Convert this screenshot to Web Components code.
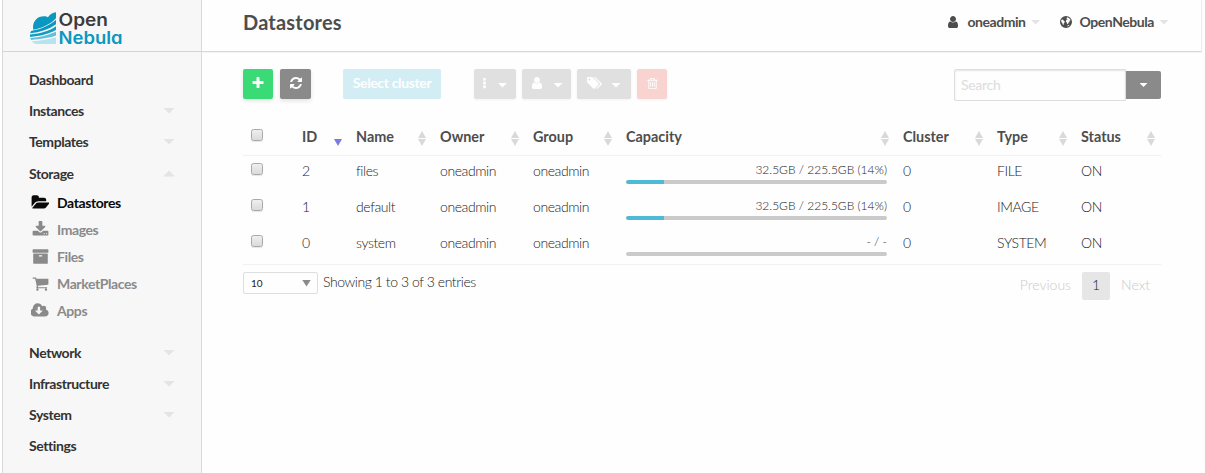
<!DOCTYPE html>
<html lang="en">
<head>
<meta charset="utf-8">
<title>OpenNebula Sunstone</title>
<style>
html,body{margin:0;height:100%;overflow:hidden;background:#fefefe}
body{font-family:Lato,"Liberation Sans",sans-serif;color:#4d4d4d}
</style>
</head>
<body>
<one-app></one-app>
<script>
const ICONS = {
plus:[1792,'M1600 736v192q0 40-28 68t-68 28h-416v416q0 40-28 68t-68 28h-192q-40 0-68-28t-28-68v-416h-416q-40 0-68-28t-28-68v-192q0-40 28-68t68-28h416v-416q0-40 28-68t68-28h192q40 0 68 28t28 68v416h416q40 0 68 28t28 68z'],
refresh:[1792,'M1639 1056q0 5-1 7-64 268-268 434.5t-478 166.5q-146 0-282.5-55t-243.5-157l-129 129q-19 19-45 19t-45-19-19-45v-448q0-26 19-45t45-19h448q26 0 45 19t19 45-19 45l-137 137q71 66 161 102t187 36q134 0 250-65t186-179q11-17 53-117 8-23 30-23h192q13 0 22.5 9.5t9.5 22.5zm25-800v448q0 26-19 45t-45 19h-448q-26 0-45-19t-19-45 19-45l138-138q-148-137-349-137-134 0-250 65t-186 179q-11 17-53 117-8 23-30 23h-199q-13 0-22.5-9.5t-9.5-22.5v-7q65-268 270-434.5t480-166.5q146 0 284 55.5t245 156.5l130-129q19-19 45-19t45 19 19 45z'],
user:[1792,'M1536 1399q0 109-62.5 187t-150.5 78h-854q-88 0-150.5-78t-62.5-187q0-85 8.5-160.5t31.5-152 58.5-131 94-89 134.5-34.5q131 128 313 128t313-128q76 0 134.5 34.5t94 89 58.5 131 31.5 152 8.5 160.5zm-256-887q0 159-112.5 271.5t-271.5 112.5-271.5-112.5-112.5-271.5 112.5-271.5 271.5-112.5 271.5 112.5 112.5 271.5z'],
ellipsis:[1792,'M1088 1248v192q0 40-28 68t-68 28h-192q-40 0-68-28t-28-68v-192q0-40 28-68t68-28h192q40 0 68 28t28 68zm0-512v192q0 40-28 68t-68 28h-192q-40 0-68-28t-28-68v-192q0-40 28-68t68-28h192q40 0 68 28t28 68zm0-512v192q0 40-28 68t-68 28h-192q-40 0-68-28t-28-68v-192q0-40 28-68t68-28h192q40 0 68 28t28 68z'],
trash:[1792,'M704 736v576q0 14-9 23t-23 9h-64q-14 0-23-9t-9-23v-576q0-14 9-23t23-9h64q14 0 23 9t9 23zm256 0v576q0 14-9 23t-23 9h-64q-14 0-23-9t-9-23v-576q0-14 9-23t23-9h64q14 0 23 9t9 23zm256 0v576q0 14-9 23t-23 9h-64q-14 0-23-9t-9-23v-576q0-14 9-23t23-9h64q14 0 23 9t9 23zm128 724v-948h-896v948q0 22 7 40.5t14.5 27 10.5 8.5h832q3 0 10.5-8.5t14.5-27 7-40.5zm-672-1076h448l-48-117q-7-9-17-11h-317q-10 2-17 11zm928 32v64q0 14-9 23t-23 9h-96v948q0 83-47 143.5t-113 60.5h-832q-66 0-113-58.5t-47-141.5v-952h-96q-14 0-23-9t-9-23v-64q0-14 9-23t23-9h309l70-167q15-37 54-63t79-26h320q40 0 79 26t54 63l70 167h309q14 0 23 9t9 23z'],
tags:[1920,'M448 448q0-53-37.5-90.5t-90.5-37.5-90.5 37.5-37.5 90.5 37.5 90.5 90.5 37.5 90.5-37.5 37.5-90.5zm1067 576q0 53-37 90l-491 492q-39 37-91 37-53 0-90-37l-715-716q-38-37-64.5-101t-26.5-117v-416q0-52 38-90t90-38h416q53 0 117 26.5t102 64.5l715 714q37 39 37 91zm384 0q0 53-37 90l-491 492q-39 37-91 37-36 0-59-14t-53-45l470-470q37-37 37-90 0-52-37-91l-715-714q-38-38-102-64.5t-117-26.5h224q53 0 117 26.5t102 64.5l715 714q37 39 37 91z'],
folder:[1952,'M1943 952q0 31-31 66l-336 396q-43 51-120.5 86.5t-143.5 35.5h-1088q-34 0-60.5-13t-26.5-43q0-31 31-66l336-396q43-51 120.5-86.5t143.5-35.5h1088q34 0 60.5 13t26.5 43zm-343-344v160h-832q-94 0-197 47.5t-164 119.5l-337 396-5 6q0-4-.5-12.5t-.5-12.5v-960q0-92 66-158t158-66h320q92 0 158 66t66 158v32h544q92 0 158 66t66 158z'],
download:[1792,'M1344 1344q0-26-19-45t-45-19-45 19-19 45 19 45 45 19 45-19 19-45zm256 0q0-26-19-45t-45-19-45 19-19 45 19 45 45 19 45-19 19-45zm128-224v320q0 40-28 68t-68 28h-1472q-40 0-68-28t-28-68v-320q0-40 28-68t68-28h465l135 136q58 56 136 56t136-56l136-136h464q40 0 68 28t28 68zm-325-569q17 41-14 70l-448 448q-18 19-45 19t-45-19l-448-448q-31-29-14-70 17-39 59-39h256v-448q0-26 19-45t45-19h256q26 0 45 19t19 45v448h256q42 0 59 39z'],
archive:[1792,'M1088 832q0-26-19-45t-45-19h-256q-26 0-45 19t-19 45 19 45 45 19h256q26 0 45-19t19-45zm576-192v960q0 26-19 45t-45 19h-1408q-26 0-45-19t-19-45v-960q0-26 19-45t45-19h1408q26 0 45 19t19 45zm64-448v256q0 26-19 45t-45 19h-1536q-26 0-45-19t-19-45v-256q0-26 19-45t45-19h1536q26 0 45 19t19 45z'],
cart:[1792,'M704 1536q0 52-38 90t-90 38-90-38-38-90 38-90 90-38 90 38 38 90zm896 0q0 52-38 90t-90 38-90-38-38-90 38-90 90-38 90 38 38 90zm128-1088v512q0 24-16.5 42.5t-40.5 21.5l-1044 122q13 60 13 70 0 16-24 64h920q26 0 45 19t19 45-19 45-45 19h-1024q-26 0-45-19t-19-45q0-11 8-31.5t16-36 21.5-40 15.5-29.5l-177-823h-204q-26 0-45-19t-19-45 19-45 45-19h256q16 0 28.5 6.5t19.5 15.5 13 24.5 8 26 5.5 29.5 4.5 26h1201q26 0 45 19t19 45z'],
cloud:[1856,'M1216 928q0-14-9-23t-23-9h-224v-352q0-13-9.5-22.5t-22.5-9.5h-192q-13 0-22.5 9.5t-9.5 22.5v352h-224q-13 0-22.5 9.5t-9.5 22.5q0 14 9 23l352 352q9 9 23 9t23-9l351-351q10-12 10-24zm640 224q0 159-112.5 271.5t-271.5 112.5h-1088q-185 0-316.5-131.5t-131.5-316.5q0-130 70-240t188-165q-2-30-2-43 0-212 150-362t362-150q156 0 285.5 87t188.5 231q71-62 166-62 106 0 181 75t75 181q0 76-41 138 130 31 213.5 135.5t83.5 238.5z'],
globe:[1792,'M896 128a768 768 0 1 0 0 1536a768 768 0 1 0 0-1536zM1010 290l150 40 110 80 150 110 60 150-90 20-60 90 30 130-130 60-50 120-60 90-90-60-20-160-110-60-20-150 90-110 130-20-30-80-90 20-40-70 70-60zM330 600l120-20 110 70 60 110 120 60-20 130-90 80-20 150-60 90-90-100-30-150-110-100-50-140zM1110 1330l170-80 60 50-190 140-110 30z']
};
const CSS = s => `<style>*{box-sizing:border-box}${s}</style>`;
const define = (name, render) => customElements.define(name, class extends HTMLElement {
  connectedCallback(){
    if (this.shadowRoot) return;
    this.attachShadow({mode:'open'}).innerHTML = render(this);
  }
});

define('one-icon', el => {
  const [w,d] = ICONS[el.getAttribute('name')];
  const s = +el.getAttribute('size') || 14;
  return CSS(`:host{display:inline-flex;flex:none}svg{display:block;fill:currentColor}`) +
    `<svg width="${s*w/1792}" height="${s}" viewBox="0 0 ${w} 1792"><path fill-rule="evenodd" d="${d}"/></svg>`;
});

define('one-caret', () => CSS(`:host{display:block;flex:none;width:var(--w,12px);height:var(--h,6px);background:var(--caret,#e4e4e4);clip-path:polygon(0 0,100% 0,50% 100%)}
  :host([up]){clip-path:polygon(0 100%,100% 100%,50% 0)}`));

define('one-logo', () => CSS(`:host{display:block}svg{display:block}text{font-family:Inter,Lato,sans-serif;font-weight:600;font-feature-settings:"cv11"}`) + `
<svg width="110" height="41" viewBox="0 0 110 41">
  <path fill="#0a98c0" d="M4.400 19.800C3 14.500 6 8.700 10.500 7C14.500 5.400 18 6.500 19 7.300C21 4.500 23.500 2.200 27 2.200V8.200C22 14 14 17.500 4.400 19.800z"/>
  <path fill="#0a98c0" d="M2.200 20.900C13 19.200 21 15 27 9.800V14.300C20 19.500 11 22.300 1 23.300z"/>
  <path fill="#149cc3" d="M1 24.500C12 23.500 20 21 27 16.200V19.900C19 24 11 25.900 1 26.900z"/>
  <path fill="#62c0dc" d="M1.200 28.100C11 27.300 19 25.300 27 21.800V25.500C19 28.200 12 29 2 29.900z"/>
  <path fill="#b5e3f0" d="M2.800 31.200C12 30.500 20 29.300 27 27.200V34H8C5.500 34 3.800 32.800 2.800 31.200z"/>
  <text x="29.500" y="15.600" font-size="17.500" fill="#3c3c3c" textLength="49.500" lengthAdjust="spacingAndGlyphs">Open</text>
  <text x="29.500" y="33.600" font-size="17.500" fill="#0a98c0" textLength="64" lengthAdjust="spacingAndGlyphs">Nebula</text>
</svg>`);

define('nav-item', el => CSS(`:host{display:flex;align-items:center;justify-content:space-between;height:31px;margin:0 26px 0 26px;font-size:14px;letter-spacing:-.42px;font-weight:700;color:#333;line-height:18px}`) +
  `<slot></slot>${el.hasAttribute('open') ? '<one-caret up></one-caret>' : el.hasAttribute('menu') ? '<one-caret></one-caret>' : ''}`);

define('nav-sub', el => CSS(`:host{display:flex;align-items:center;height:27px;margin-left:26px;font-size:14px;letter-spacing:-.4px;font-weight:700;color:#8a8a8a;line-height:18px}
  :host([active]){color:#0a0a0a}
  .i{width:22px;margin-right:6px;display:flex;justify-content:center}`) +
  `<span class="i"><one-icon name="${el.getAttribute('icon')}" size="17"></one-icon></span><slot></slot>`);

define('one-sidebar', () => CSS(`:host{display:block;width:200px;margin-left:2px;background:#f7f7f7;border:solid #d9d9d9;border-width:0 1px}
  header{height:52px;border-bottom:1px solid #d3d3d3;padding:10px 0 0 26px}
  nav{padding-top:12px}
  .sub{margin-bottom:13px}
  .on{margin-top:1px}`) + `
<header><one-logo></one-logo></header>
<nav>
  <nav-item>Dashboard</nav-item><nav-item menu>Instances</nav-item><nav-item menu>Templates</nav-item><nav-item class="on" open>Storage</nav-item>
  <div class="sub">
    <nav-sub icon="folder" active>Datastores</nav-sub><nav-sub icon="download">Images</nav-sub><nav-sub icon="archive">Files</nav-sub><nav-sub icon="cart">MarketPlaces</nav-sub><nav-sub icon="cloud">Apps</nav-sub>
  </div>
  <nav-item menu>Network</nav-item><nav-item menu>Infrastructure</nav-item><nav-item menu>System</nav-item><nav-item>Settings</nav-item>
</nav>`);

define('one-topbar', () => CSS(`:host{display:flex;height:52px;margin-right:3px;border-bottom:1px solid #d9d9d9;border-right:1px solid #ededed;box-shadow:0 1px 1px #0000000a;padding:0 32px 7px 41px;align-items:center;color:#4d4d4d}
  h1{margin:0;font-size:20px;letter-spacing:.2px;line-height:24px;font-weight:700;flex:1}
  .m{display:flex;align-items:center;font-size:14px;letter-spacing:-.44px;line-height:18px;font-weight:700;--w:10px;--h:5px}
  .m one-icon{margin-right:7px}.m one-caret{margin-left:5px}
  .m+.m{margin-left:18px}`) + `
<h1>Datastores</h1>
<div class="m"><one-icon name="user" size="14"></one-icon><span>oneadmin</span><one-caret></one-caret></div>
<div class="m"><one-icon name="globe" size="14"></one-icon><span>OpenNebula</span><one-caret></one-caret></div>`);

define('one-button', el => CSS(`:host{display:flex;align-items:center;justify-content:center;height:30px;border-radius:2px;color:#fefefe;font-size:14px;letter-spacing:-.36px;line-height:18px;padding-bottom:2px;font-weight:700;box-shadow:0 2px 4px #0000001c;--caret:#fefefe;--w:10px;--h:5px;background:#8a8a8a}
  :host([kind=new]){background:#3adb76}
  :host([kind=cluster]){background:#d2edf4;box-shadow:none}
  :host([kind=off]){background:#e0e0e0;box-shadow:0 1px 3px #0000000d}
  :host([kind=del]){background:#f9d3cf;box-shadow:0 1px 3px #0000000d}
  one-caret{margin-left:9px;position:relative;top:2px}`) +
  `<slot></slot>${el.hasAttribute('menu') ? '<one-caret></one-caret>' : ''}`);

define('one-toolbar', () => CSS(`:host{display:flex;align-items:flex-start;height:34px}
  one-button{margin-right:6px}
  .search{margin-left:auto;display:flex;align-items:center}
  .box{width:172px;height:32px;border:1px solid #dedede;border-radius:2px 0 0 2px;box-shadow:inset 0 1px 2px #0a0a0a1a;padding:6px 6px;font-size:14px;letter-spacing:-.3px;line-height:18px;color:#dcdcdc;font-weight:400}
  .search one-button{width:35px;height:28px;margin:0;padding:0;border-radius:0 2px 2px 0;box-shadow:none;--caret:#fefefe}
  .search one-caret{--w:8px;--h:4px;--caret:#fefefe;position:static;margin:0}`) + `
<one-button kind="new" style="width:30px;margin-right:7px"><one-icon name="plus" size="14"></one-icon></one-button>
<one-button style="width:31px;margin-right:32px"><one-icon name="refresh" size="14"></one-icon></one-button>
<one-button kind="cluster" style="width:98px;margin-right:33px">Select cluster</one-button>
<one-button kind="off" menu style="width:42px"><one-icon name="ellipsis" size="13" style="margin:0 -2px 0 -5px"></one-icon></one-button>
<one-button kind="off" menu style="width:49px"><one-icon name="user" size="14"></one-icon></one-button>
<one-button kind="off" menu style="width:54px"><one-icon name="tags" size="14"></one-icon></one-button>
<one-button kind="del" style="width:30px"><one-icon name="trash" size="13"></one-icon></one-button>
<div class="search"><div class="box">Search</div><one-button><one-caret></one-caret></one-button></div>`);

define('one-check', () => CSS(`:host{display:block;width:12px;height:12px;border:1px solid #a9a9a9;border-radius:2.500px;background:linear-gradient(#efefef,#dadada);box-shadow:0 1px 1px #0000001a}`));

define('capacity-bar', el => CSS(`:host{display:block;font-size:12px;letter-spacing:0;line-height:16px;text-align:right;padding-top:6px}
  .bar{height:4px;margin-top:2px;border-radius:2px;background:#cacaca;overflow:hidden}
  .bar i{display:block;height:4px;background:#4dbbd5;border-radius:2px 0 0 2px}`) +
  `<div><slot></slot></div><div class="bar"><i style="width:${el.getAttribute('used')}%"></i></div>`);

const COLS = '51px 54px 84px 93px 93px 277px 94px 84px 88px';
define('table-head', el => {
  const cols = ['Name','Owner','Group','Capacity','Cluster','Type','Status'];
  return CSS(`:host{display:grid;grid-template-columns:${COLS};height:37px;border-bottom:1px solid #f1f1f1;font-size:14.400px;font-weight:700;line-height:18px}
  div{padding:9px 6px 0 8px;display:flex;justify-content:space-between;align-items:flex-start}
  one-check{margin-top:1px}
  .s{display:flex;flex-direction:column;gap:1px;margin-top:3px;--caret:#d9d9d9;--w:8px;--h:7px}
  .d{margin-top:11px;--caret:#7b7be0;--w:8px;--h:7px}`) +
  `<div><one-check></one-check></div><div>ID<one-caret class="d"></one-caret></div>` +
  cols.map(c => `<div>${c}<span class="s"><one-caret up></one-caret><one-caret></one-caret></span></div>`).join('');
});

define('table-row', el => {
  const v = el.getAttribute('cells').split('|');
  return CSS(`:host{display:grid;grid-template-columns:${COLS};height:36px;font-size:14px;letter-spacing:-.42px;font-weight:300;line-height:18px;color:#222}
  div.c{padding:6px 8px 0}
  one-check{margin-top:1px}`) +
  `<div class="c"><one-check></one-check></div>` +
  v.slice(0,4).map(t => `<div class="c">${t}</div>`).join('') +
  `<div style="padding:0 8px"><capacity-bar used="${el.getAttribute('used')}">${v[4]}</capacity-bar></div>` +
  v.slice(5).map(t => `<div class="c">${t}</div>`).join('');
});

define('table-footer', () => CSS(`:host{display:flex;align-items:flex-start;border-top:1px solid #f1f1f1;padding-top:7px;font-size:14px;font-weight:300;line-height:18px;color:#222}
  .sel{width:75px;height:22px;border:1px solid #dedede;border-radius:2px;display:flex;align-items:center;justify-content:space-between;padding:0 6px 0 7px;font-size:10px;font-weight:400;--w:9px;--h:7px;--caret:#8a8a8a}
  .info{margin:1px auto 0 5px;letter-spacing:-.43px}
  .p{display:flex;align-items:center;height:28px;color:#cacaca}
  .p span{position:relative;top:-1px}
  b{font-weight:300;width:28px;height:28px;line-height:26px;text-align:center;background:#e6e6e6;border-radius:2px;color:#222;margin:0 11px}
  .p span:last-child{margin-right:11px}`) + `
<div class="sel"><span>10</span><one-caret></one-caret></div><span class="info">Showing 1 to 3 of 3 entries</span>
<div class="p"><span>Previous</span><b>1</b><span>Next</span></div>`);

define('one-app', () => CSS(`:host{display:grid;grid-template-columns:202px 1fr;height:473px}
  main{padding:17px 44px 0 41px}
  one-toolbar{margin-bottom:16px}`) + `
<one-sidebar></one-sidebar>
<section><one-topbar></one-topbar>
<main><one-toolbar></one-toolbar>
<table-head></table-head>
<table-row used="14.500" cells="2|files|oneadmin|oneadmin|32.5GB / 225.5GB (14%)|0|FILE|ON"></table-row>
<table-row used="14.500" cells="1|default|oneadmin|oneadmin|32.5GB / 225.5GB (14%)|0|IMAGE|ON"></table-row>
<table-row used="0" cells="0|system|oneadmin|oneadmin|- / -|0|SYSTEM|ON"></table-row>
<table-footer></table-footer>
</main></section>`);
</script>
</body>
</html>
